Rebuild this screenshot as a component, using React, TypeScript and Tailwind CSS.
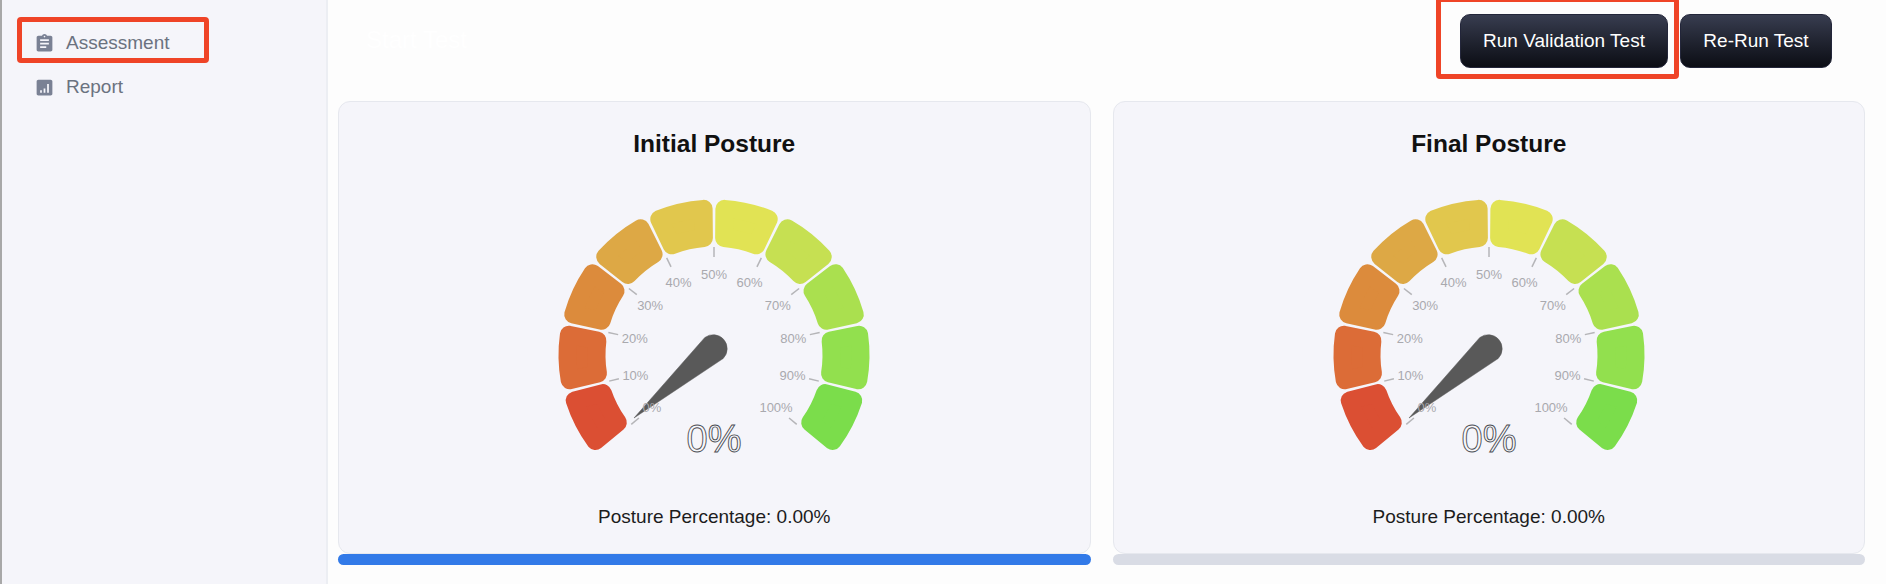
const SEGMENT_COLORS = [
  "#db4f33",
  "#dc6c37",
  "#dc8b3c",
  "#dda845",
  "#e1c74d",
  "#e1e354",
  "#c6e052",
  "#aae04f",
  "#92e04e",
  "#7bdd4b",
];

const CX = 160;
const CY = 164;

// angle 0 is straight up, the gauge runs from -130 to +130 degrees
const polar = (r: number, deg: number) => {
  const rad = (deg * Math.PI) / 180;
  return { x: CX + r * Math.sin(rad), y: CY - r * Math.cos(rad) };
};

const segmentPath = (index: number) => {
  const step = 26;
  const corner = 9;
  const rOuter = 155.5 - corner;
  const rInner = 108.5 + corner;
  const gap = 0.55;
  const start = -130 + index * step + gap;
  const end = start + step - gap * 2;
  const padOuter = (corner / rOuter) * (180 / Math.PI);
  const padInner = (corner / rInner) * (180 / Math.PI);
  const a = polar(rOuter, start + padOuter);
  const b = polar(rOuter, end - padOuter);
  const c = polar(rInner, end - padInner);
  const d = polar(rInner, start + padInner);
  return `M${a.x} ${a.y}A${rOuter} ${rOuter} 0 0 1 ${b.x} ${b.y}L${c.x} ${c.y}A${rInner} ${rInner} 0 0 0 ${d.x} ${d.y}Z`;
};

const Gauge = () => {
  const ticks = Array.from({ length: 11 }, (_, i) => i);

  return (
    <svg width="320" height="290" viewBox="0 0 320 290" className="block">
      {SEGMENT_COLORS.map((color, i) => (
        <path
          key={color}
          d={segmentPath(i)}
          fill={color}
          stroke={color}
          strokeWidth="18"
          strokeLinejoin="round"
        />
      ))}

      {/* needle */}
      <path
        d="M80 227L150.8 146.5A14 14 0 0 1 169.2 167.5Z"
        fill="#595959"
        stroke="#595959"
        strokeWidth="0.5"
        strokeLinejoin="round"
      />

      {ticks.map((i) => {
        const deg = -130 + i * 26;
        const from = polar(108, deg);
        const to = polar(98, deg);
        const label = polar(81, deg);
        return (
          <g key={i}>
            <line
              x1={from.x}
              y1={from.y}
              x2={to.x}
              y2={to.y}
              stroke="#b5b5b8"
              strokeWidth="1.5"
            />
            <text
              x={label.x}
              y={label.y + 5}
              textAnchor="middle"
              fontSize="13"
              fill="#a9a9ae"
              fontFamily="'Liberation Sans', Arial, sans-serif"
            >
              {i * 10}%
            </text>
          </g>
        );
      })}

      <text
        x="160"
        y="261"
        textAnchor="middle"
        fontSize="38"
        fill="#f8f8fb"
        stroke="#4a4c52"
        strokeWidth="0.9"
        fontFamily="'Liberation Sans', Arial, sans-serif"
      >
        0%
      </text>
    </svg>
  );
};

const PostureCard = ({ title, barClass }: { title: string; barClass: string }) => {
  return (
    <div className="flex flex-col">
      <div className="h-[453px] flex flex-col items-center bg-[#f5f5fa] border border-[#e6e8ee] rounded-xl pt-[28px]">
        <h2 className="text-[24.5px] leading-[28px] font-bold text-[#111111]">{title}</h2>
        <div className="mt-[33px]">
          <Gauge />
        </div>
        <p className="mt-[24px] text-[19px] leading-[24px] text-[#1c1c1c]">
          Posture Percentage: 0.00%
        </p>
      </div>
      <div className={`h-[11px] rounded-md ${barClass}`}></div>
    </div>
  );
};

export default function App() {
  return (
    <div
      className="flex h-[584px] w-[1886px] overflow-hidden bg-[#fdfdfd] font-['Liberation_Sans',Arial,sans-serif]"
    >
      {/* Sidebar */}
      <aside className="w-[328px] shrink-0 bg-[#f5f5fa] border-l-2 border-l-[#a8a8a8] border-r-2 border-r-[#eceef3] pt-[21px] pl-[16px]">
        <div className="relative flex items-center gap-[11px] h-[44px] pl-[16px] text-[19px] text-[#6b7280]">
          <svg width="21" height="21" viewBox="0 0 24 24" fill="#7a8194">
            <path d="M19 3h-4.18C14.4 1.84 13.3 1 12 1c-1.3 0-2.4.84-2.82 2H5c-1.1 0-2 .9-2 2v14c0 1.1.9 2 2 2h14c1.1 0 2-.9 2-2V5c0-1.1-.9-2-2-2zm-7 0c.55 0 1 .45 1 1s-.45 1-1 1-1-.45-1-1 .45-1 1-1zm2 14H7v-2h7v2zm3-4H7v-2h10v2zm0-4H7V7h10v2z" />
          </svg>
          <span>Assessment</span>
          {/* annotation */}
          <div className="absolute left-[-1px] top-[-4px] w-[192px] h-[46px] border-[5px] border-[#ef4427] rounded-[4px]"></div>
        </div>
        <div className="flex items-center gap-[11px] h-[44px] pl-[16px] text-[19px] text-[#6b7280]">
          <svg width="21" height="21" viewBox="0 0 24 24" fill="#7a8194">
            <path d="M5 3h14c1.1 0 2 .9 2 2v14c0 1.1-.9 2-2 2H5c-1.1 0-2-.9-2-2V5c0-1.1.9-2 2-2zm2 15h2v-3H7v3zm4 0h2v-5h-2v5zm4 0h2V8h-2v10z" />
          </svg>
          <span>Report</span>
        </div>
      </aside>

      {/* Main */}
      <main className="flex-1 flex flex-col pl-[10px] pr-[21px]">
        <div className="h-[101px] flex justify-between items-start pt-[14px]">
          <span className="ml-[28px] mt-[12px] text-[24px] leading-[28px] text-white">Start Test</span>
          <div className="flex items-center gap-[12px] pr-[33px]">
            <div className="relative">
              <button className="block w-[208px] h-[54px] rounded-[10px] border border-[#23263a] bg-gradient-to-b from-[#383d50] to-[#0c0e15] text-white text-[19px]">
                Run Validation Test
              </button>
              {/* annotation */}
              <div className="absolute left-[-24px] top-[-17px] w-[243px] h-[82px] border-[5px] border-[#ef4427] rounded-[4px]"></div>
            </div>
            <button className="block w-[152px] h-[54px] rounded-[10px] border border-[#23263a] bg-gradient-to-b from-[#383d50] to-[#0c0e15] text-white text-[19px]">
              Re-Run Test
            </button>
          </div>
        </div>

        <div className="grid grid-cols-2 gap-[22px]">
          <PostureCard title="Initial Posture" barClass="bg-[#327ae8]" />
          <PostureCard title="Final Posture" barClass="bg-[#d9dce5]" />
        </div>
      </main>
    </div>
  );
}
